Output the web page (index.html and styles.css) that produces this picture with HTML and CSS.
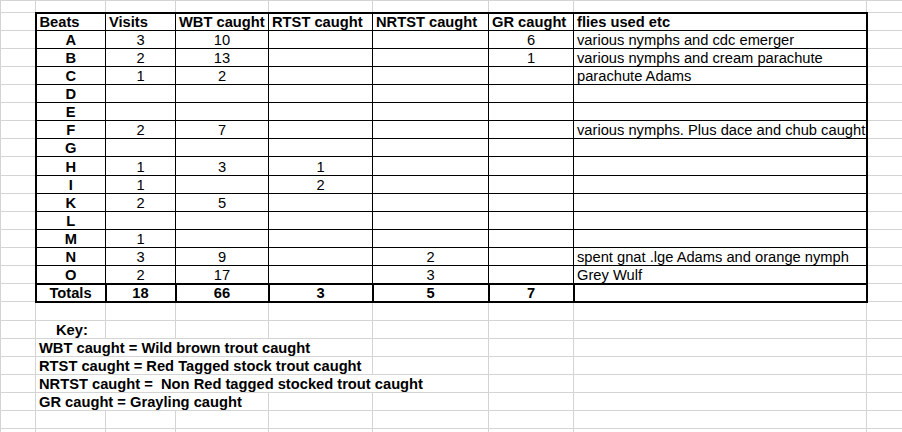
FILE: index.html
```html
<!DOCTYPE html>
<html>
<head>
<meta charset="utf-8">
<title>Beats</title>
<link rel="stylesheet" href="styles.css">
</head>
<body>
<div class="wrap">
<table class="sheet">
<colgroup>
<col class="w0"><col class="w1"><col class="w2"><col class="w3"><col class="w4"><col class="w5"><col class="w6"><col class="w7"><col class="w8">
</colgroup>
<tbody>
<tr class="r0"><td></td><td></td><td></td><td></td><td></td><td></td><td></td><td></td><td></td></tr>
<tr class="hd">
<td></td>
<td class="x first b">Beats</td>
<td class="x b">Visits</td>
<td class="x b">WBT caught</td>
<td class="x b">RTST caught</td>
<td class="x b">NRTST caught</td>
<td class="x b">GR caught</td>
<td class="x last b">flies used etc</td>
<td></td>
</tr>
<tr><td></td><td class="x first b c">A</td><td class="x c">3</td><td class="x c">10</td><td class="x c"></td><td class="x c"></td><td class="x c">6</td><td class="x last">various nymphs and cdc emerger</td><td></td></tr>
<tr><td></td><td class="x first b c">B</td><td class="x c">2</td><td class="x c">13</td><td class="x c"></td><td class="x c"></td><td class="x c">1</td><td class="x last">various nymphs and cream parachute</td><td></td></tr>
<tr><td></td><td class="x first b c">C</td><td class="x c">1</td><td class="x c">2</td><td class="x c"></td><td class="x c"></td><td class="x c"></td><td class="x last">parachute Adams</td><td></td></tr>
<tr><td></td><td class="x first b c">D</td><td class="x c"></td><td class="x c"></td><td class="x c"></td><td class="x c"></td><td class="x c"></td><td class="x last"></td><td></td></tr>
<tr><td></td><td class="x first b c">E</td><td class="x c"></td><td class="x c"></td><td class="x c"></td><td class="x c"></td><td class="x c"></td><td class="x last"></td><td></td></tr>
<tr><td></td><td class="x first b c">F</td><td class="x c">2</td><td class="x c">7</td><td class="x c"></td><td class="x c"></td><td class="x c"></td><td class="x last">various nymphs. Plus dace and chub caught</td><td></td></tr>
<tr><td></td><td class="x first b c">G</td><td class="x c"></td><td class="x c"></td><td class="x c"></td><td class="x c"></td><td class="x c"></td><td class="x last"></td><td></td></tr>
<tr class="tall"><td></td><td class="x first b c">H</td><td class="x c">1</td><td class="x c">3</td><td class="x c">1</td><td class="x c"></td><td class="x c"></td><td class="x last"></td><td></td></tr>
<tr><td></td><td class="x first b c">I</td><td class="x c">1</td><td class="x c"></td><td class="x c">2</td><td class="x c"></td><td class="x c"></td><td class="x last"></td><td></td></tr>
<tr><td></td><td class="x first b c">K</td><td class="x c">2</td><td class="x c">5</td><td class="x c"></td><td class="x c"></td><td class="x c"></td><td class="x last"></td><td></td></tr>
<tr><td></td><td class="x first b c">L</td><td class="x c"></td><td class="x c"></td><td class="x c"></td><td class="x c"></td><td class="x c"></td><td class="x last"></td><td></td></tr>
<tr><td></td><td class="x first b c">M</td><td class="x c">1</td><td class="x c"></td><td class="x c"></td><td class="x c"></td><td class="x c"></td><td class="x last"></td><td></td></tr>
<tr><td></td><td class="x first b c">N</td><td class="x c">3</td><td class="x c">9</td><td class="x c"></td><td class="x c">2</td><td class="x c"></td><td class="x last">spent gnat .lge Adams and orange nymph</td><td></td></tr>
<tr><td></td><td class="x first b c">O</td><td class="x c">2</td><td class="x c">17</td><td class="x c"></td><td class="x c">3</td><td class="x c"></td><td class="x last">Grey Wulf</td><td></td></tr>
<tr class="tot"><td></td><td class="x first b c">Totals</td><td class="x b c">18</td><td class="x b c">66</td><td class="x b c">3</td><td class="x b c">5</td><td class="x b c">7</td><td class="x last"></td><td></td></tr>
<tr class="gap"><td></td><td></td><td></td><td></td><td></td><td></td><td></td><td></td><td></td></tr>
<tr><td></td><td class="b key">Key:</td><td></td><td></td><td></td><td></td><td></td><td></td><td></td></tr>
<tr><td></td><td class="b" colspan="4">WBT caught = Wild brown trout caught</td><td></td><td></td><td></td><td></td></tr>
<tr><td></td><td class="b" colspan="4">RTST caught = Red Tagged stock trout caught</td><td></td><td></td><td></td><td></td></tr>
<tr><td></td><td class="b" colspan="5">NRTST caught =&nbsp; Non Red tagged stocked trout caught</td><td></td><td></td><td></td></tr>
<tr><td></td><td class="b" colspan="3">GR caught = Grayling caught</td><td></td><td></td><td></td><td></td><td></td></tr>
<tr><td></td><td></td><td></td><td></td><td></td><td></td><td></td><td></td><td></td></tr>
<tr><td></td><td></td><td></td><td></td><td></td><td></td><td></td><td></td><td></td></tr>
</tbody>
</table>
</div>
</body>
</html>
```

FILE: styles.css
```css
html, body {
  margin: 0;
  padding: 0;
  background: #ffffff;
  overflow: hidden;
}

.wrap {
  width: 902px;
  height: 432px;
  overflow: hidden;
}

.sheet {
  border-collapse: collapse;
  table-layout: fixed;
  width: 902px;
  font-family: "Liberation Sans", Arial, sans-serif;
  font-size: 14.7px;
  color: #000000;
}

.w0 { width: 35px; }
.w1 { width: 70px; }
.w2 { width: 70px; }
.w3 { width: 93px; }
.w4 { width: 104px; }
.w5 { width: 116px; }
.w6 { width: 85px; }
.w7 { width: 293px; }
.w8 { width: 36px; }

.sheet tr { height: 18px; }
.sheet tr.r0 { height: 12px; }
.sheet tr.tall { height: 19px; }
.sheet tr.gap { height: 19px; }

.sheet td {
  border: 1px solid #d4d4d4;
  padding: 0 2px 0 3px;
  white-space: nowrap;
  overflow: hidden;
  vertical-align: bottom;
  line-height: 15px;
}

.sheet td.x { border-color: #000000; }
.sheet tr.hd td.x { border-top-width: 2px; }
.sheet td.first { border-left-width: 2px; }
.sheet td.last { border-right-width: 2px; }
.sheet tr.tot td.x { border-width: 2px; }

.b { font-weight: bold; }
.sheet td.c { text-align: center; padding: 0; }
.sheet td.key { padding-left: 20px; }
```
